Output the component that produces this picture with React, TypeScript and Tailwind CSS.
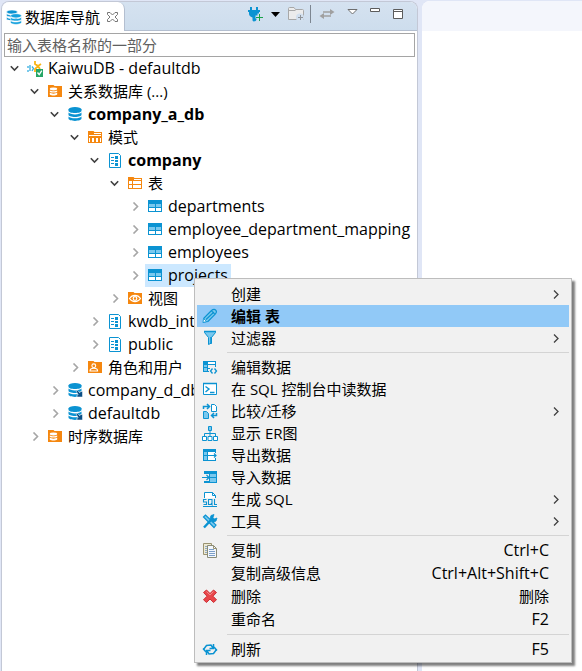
import type { ReactNode } from "react";

const BLUE = "#0b93d2";
const LIGHT = "#79c8ee";
const ORANGE = "#f5870f";

/* ---------- tree icons (15 x 15 grid) ---------- */

function TreeSvg({ children }: { children: ReactNode }) {
  return (
    <svg viewBox="0 0 15 15" className="h-[15px] w-[15px] shrink-0" aria-hidden="true">
      {children}
    </svg>
  );
}

const FolderShape = () => <path d="M0 1h5.5l1 1H14v11H0z" fill={ORANGE} />;

const Cylinder = () => (
  <g fill={BLUE}>
    <ellipse cx="7" cy="2.4" rx="6.500" ry="2.4" />
    <path d="M.5 2.400h13v1.400c0 1.300-2.800 2.300-6.500 2.300s-6.500-1-6.500-2.300z" />
    <path d="M.5 5.600c1 1.200 3.500 1.800 6.500 1.800s5.500-.6 6.500-1.800v2.200c0 1.300-2.800 2.200-6.500 2.200s-6.500-.9-6.500-2.200z" />
    <path d="M.5 9.500c1 1.200 3.500 1.800 6.500 1.800s5.500-.6 6.500-1.800v2.100c0 1.300-2.800 2.300-6.500 2.300s-6.500-1-6.500-2.300z" />
  </g>
);

const DbIcon = () => (
  <TreeSvg>
    <Cylinder />
  </TreeSvg>
);

const DbLinkIcon = () => (
  <TreeSvg>
    <Cylinder />
    <path d="M8 8l1.5-.5 2.5 2.3V8.5h2.5V14H9v-2l1.2-.4z" fill="#0b4f86" stroke="#fff" strokeWidth=".5" />
  </TreeSvg>
);

const DbFolderIcon = () => (
  <TreeSvg>
    <FolderShape />
    <g fill="#fff">
      <ellipse cx="5.5" cy="5" rx="3.7" ry="1.4" />
      <path d="M1.8 6.4c1.8 1.1 5.6 1.1 7.4 0v1.3c-1.6 1.2-5.8 1.2-7.4 0z" />
      <path d="M1.8 8.8c1.8 1.1 5.6 1.1 7.4 0v1.6c-1.6 1.4-5.8 1.4-7.4 0z" />
    </g>
  </TreeSvg>
);

const SchemaFolderIcon = () => (
  <TreeSvg>
    <FolderShape />
    <g fill="#fff" shapeRendering="crispEdges">
      <path d="M6 3h7v1H6zM1 5h12v1H1zM1 8h1v4H1zM4 8h2v4H4zM8 8h2v4H8zM12 8h1v4h-1z" />
    </g>
  </TreeSvg>
);

const TableFolderIcon = () => (
  <TreeSvg>
    <FolderShape />
    <path d="M6 3h7v1H6zM1 5h3v3H1zM5 5h8v3H5zM1 9h3v3H1zM5 9h8v3H5z" fill="#fff" shapeRendering="crispEdges" />
  </TreeSvg>
);

const ViewFolderIcon = () => (
  <TreeSvg>
    <FolderShape />
    <path d="M1.5 7.5C3 5.2 5 4.3 7 4.3s4 .9 5.500 3.200C11 9.800 9 10.700 7 10.700S3 9.800 1.500 7.500z" fill="none" stroke="#fff" strokeWidth="1.200" />
    <circle cx="7" cy="7.500" r="1.800" fill="none" stroke="#fff" strokeWidth="1.200" />
  </TreeSvg>
);

const UserFolderIcon = () => (
  <TreeSvg>
    <FolderShape />
    <g fill="none" stroke="#fff" strokeWidth="1.100">
      <circle cx="5.800" cy="5.800" r="1.900" />
      <path d="M2 11c0-2 1.500-2.700 3.800-2.700S9.600 9 9.600 11z" />
    </g>
  </TreeSvg>
);

const SchemaIcon = () => (
  <TreeSvg>
    <path d="M1.500 .5h9l2 2v12h-11z" fill="#fff" stroke={BLUE} />
    <path d="M3 4h3v1H3zM3 7h3v1H3zM3 10h3v1H3zM7 3h3v3H7zM7 7h3v2H7zM7 10h3v3H7z" fill={BLUE} shapeRendering="crispEdges" />
  </TreeSvg>
);

const TableIcon = () => (
  <TreeSvg>
    <g shapeRendering="crispEdges">
      <path d="M0 1h14v12H0z" fill={BLUE} />
      <path d="M1 5h6v3H1zM8 5h5v3H8z" fill={LIGHT} />
      <path d="M1 9h6v3H1zM8 9h5v3H8z" fill="#fff" />
    </g>
  </TreeSvg>
);

const ConnectionIcon = () => (
  <svg viewBox="0 0 16 16" className="-ml-px h-4 w-4 shrink-0" aria-hidden="true">
    <path d="M1 5v2M1 9v2M3 4v6M5 5.500l1.500 2L5 10" stroke="#35aee0" strokeWidth="1.300" fill="none" />
    <path d="M8 0v3l3 2-3 3v3M11 5l3-2M11 5l2 3" stroke="#f9b414" strokeWidth="1.800" fill="none" />
    <path d="M9 8h7v8H9z" fill="#25a566" />
    <path d="M10.500 11.500l1.700 2.200 2.600-4" stroke="#fff" strokeWidth="1.300" fill="none" />
  </svg>
);

const NavigatorIcon = () => (
  <svg viewBox="0 0 16 16" className="h-4 w-4 shrink-0" aria-hidden="true">
    <g stroke="#fff" strokeWidth=".6">
      <g fill={BLUE}>
        <ellipse cx="6" cy="3" rx="5.500" ry="2" />
        <path d="M.5 4.500c2 2 8 2 11 0V7c-3 1.600-8 1.600-11 0z" />
        <path d="M.5 8c2 2 8 2 11 0v2.500c-3 1.600-8 1.600-11 0z" />
      </g>
      <g fill="#13a0dd">
        <ellipse cx="10" cy="6.800" rx="5.500" ry="2.100" />
        <path d="M4.500 8.200c2 2 8 2 11 0v2.300c-2 2-9 2-11 0z" />
        <path d="M4.500 11.500c2 2 8 2 11 0v2.200c-2 2.300-9 2.300-11 0z" />
      </g>
    </g>
  </svg>
);

/* ---------- menu icons (16 x 16 grid) ---------- */

function MenuSvg({ children }: { children: ReactNode }) {
  return (
    <svg viewBox="0 0 16 16" className="h-4 w-4" fill="none" stroke={BLUE} aria-hidden="true">
      {children}
    </svg>
  );
}

const PencilIcon = () => (
  <MenuSvg>
    <path d="M1.500 14l.5-4 7.500-7.500c2-1.800 3.500-1.200 4.200-.4s1.300 2.300-.5 4L6 13.500z" fill={LIGHT} strokeWidth="1.200" />
    <path d="M4 11.500L12 4M9.500 2.800l3.500 3.500" strokeWidth="1.100" />
    <path d="M1.500 10.500l3 3-3.500 1z" fill="#fff" strokeWidth=".8" />
  </MenuSvg>
);

const FilterIcon = () => (
  <MenuSvg>
    <path d="M2.500 1.500h11v1l-4 5v5.500l-3 1.500V7.500l-4-5z" fill={LIGHT} />
    <path d="M2 1.500h12M9 7v7" strokeWidth="1.500" />
  </MenuSvg>
);

const EditDataIcon = () => (
  <MenuSvg>
    <g stroke="none" shapeRendering="crispEdges">
      <path d="M1 2h13v6h-1V6H6v3h2v1H6v2h1v1H1z" fill={BLUE} />
      <path d="M2 6h3v2H2zM2 9h3v3H2z" fill={LIGHT} />
      <path d="M6 3h7v2H6z" fill="#fff" />
    </g>
    <path d="M10.500 9.500l-2 2.500 2 2.500M12.500 9.500l2 2.500-2 2.500" strokeWidth="1.300" />
  </MenuSvg>
);

const ConsoleIcon = () => (
  <MenuSvg>
    <path d="M1.500 2.500h13v11h-13z" fill="#fff" />
    <path d="M1 2.500h14M3.500 5.500L7 8l-3.500 3M8 11.500h4.500" strokeWidth="1.400" />
  </MenuSvg>
);

const CompareIcon = () => (
  <MenuSvg>
    <path d="M9.500 1.500h3l2 2v5h-5z" fill="#fff" />
    <path d="M1.500 8.500h3l2 2v5h-5z" fill={LIGHT} />
    <path d="M1.500 6V3.500H7M5 1l2.500 2.500L5 6M14.500 10v2.500H9.500M12 10l-2.500 2.500L12 15" strokeWidth="1.500" />
  </MenuSvg>
);

const DiagramIcon = () => (
  <MenuSvg>
    <path d="M6.500 1.500h3v4h-3z" fill={LIGHT} />
    <path d="M.5 11.500h4v4h-4zM6 11.500h4v4H6zM11.500 11.500h4v4h-4z" fill="#fff" />
    <path d="M8 6v5M2.500 11V8.500h11V11" />
  </MenuSvg>
);

const ExportIcon = () => (
  <MenuSvg>
    <g stroke="none" shapeRendering="crispEdges">
      <path d="M1 2h13v12H1z" fill={BLUE} />
      <path d="M2 5h3v3H2zM2 9h3v4H2z" fill={LIGHT} />
      <path d="M6 5h7v8H6z" fill="#fff" />
      <path d="M13 6h2v5h-2z" fill="#f1f1f1" />
    </g>
    <path d="M6 8.500h8M12 6.500l2 2-2 2" strokeWidth="1.200" />
  </MenuSvg>
);

const ImportIcon = () => (
  <MenuSvg>
    <g stroke="none" shapeRendering="crispEdges">
      <path d="M2 2h13v12H2z" fill={BLUE} />
      <path d="M8 5h6v3H8zM8 9h6v4H8z" fill={LIGHT} />
      <path d="M0 5h7v7H0z" fill="#f1f1f1" />
    </g>
    <path d="M0 8.500h6.500M4.500 6l2.500 2.500L4.500 11" strokeWidth="1.200" />
  </MenuSvg>
);

const GenerateSqlIcon = () => (
  <MenuSvg>
    <path d="M2.500 7V1.500h8l3 3V7" fill="#fff" />
    <path d="M10.500 1.500v3h3M1 15.500h14" />
    <path d="M4.500 8.500H1.500V11h3v2.500h-3M6.500 8.500H10v5H6.500zM9 12l1.500 2.500M12.500 8v5.500H15" strokeWidth="1.100" />
  </MenuSvg>
);

const ToolsIcon = () => (
  <MenuSvg>
    <path d="M1.500 4l2-2L14 12l-2 2.500z" fill={LIGHT} strokeWidth="1.200" />
    <path d="M2 14.500l7.500-8" strokeWidth="2.400" />
    <path d="M8 5.500l1-3 3-1-1 3L12.500 6l2.500-1-1 3-3 1.500z" fill={BLUE} strokeWidth=".8" />
  </MenuSvg>
);

const CopyIcon = () => (
  <MenuSvg>
    <path d="M1.500 1.500h8v11h-8z" fill="#eee9d2" stroke="#9a9472" />
    <path d="M3 4.500h2M3 6.500h2M3 8.500h2M3 10.500h2" stroke="#8fa9c4" />
    <path d="M5.500 3.500h6l3 3v9h-9z" fill="#f3f7fd" stroke="#8a8c78" />
    <path d="M7 7.500h5M7 9.500h6M7 11.500h6M7 13.500h6" stroke="#7c9fc8" />
    <path d="M11.500 3.500v3h3" stroke="#9a9472" />
  </MenuSvg>
);

const DeleteIcon = () => (
  <MenuSvg>
    <path d="M4.500 2L8 5.500 11.500 2 14.500 4.500 11 8.200l3.500 3.600-3 2.700L8 11l-3.500 3.500-3-2.700L5 8.200 1.500 4.500z" fill="#e8474b" stroke="#cf2f35" />
    <path d="M4.500 3.500L8 7l3.500-3.500" stroke="#f28a8a" />
  </MenuSvg>
);

const RefreshIcon = () => (
  <MenuSvg>
    <path d="M1.500 8.500l3-4L9 4l2 3M11.500 3v4.500H7.500M14.500 8.500l-3 4L7 13l-2-3M4.500 14V9.500H8.500" strokeWidth="1.500" />
    <path d="M1 7.500l3 3.500M15 9.500L12 6" strokeWidth="1.500" />
  </MenuSvg>
);

/* ---------- navigator tree ---------- */

type Node = {
  label: string;
  icon: ReactNode;
  open?: boolean;
  bold?: boolean;
  selected?: boolean;
  children?: Node[];
};

const tree: Node[] = [
  {
    label: "KaiwuDB - defaultdb",
    icon: <ConnectionIcon />,
    open: true,
    children: [
      {
        label: "关系数据库 (...)",
        icon: <DbFolderIcon />,
        open: true,
        children: [
          {
            label: "company_a_db",
            icon: <DbIcon />,
            open: true,
            bold: true,
            children: [
              {
                label: "模式",
                icon: <SchemaFolderIcon />,
                open: true,
                children: [
                  {
                    label: "company",
                    icon: <SchemaIcon />,
                    open: true,
                    bold: true,
                    children: [
                      {
                        label: "表",
                        icon: <TableFolderIcon />,
                        open: true,
                        children: [
                          { label: "departments", icon: <TableIcon /> },
                          { label: "employee_department_mapping", icon: <TableIcon /> },
                          { label: "employees", icon: <TableIcon /> },
                          { label: "projects", icon: <TableIcon />, selected: true },
                        ],
                      },
                      { label: "视图", icon: <ViewFolderIcon /> },
                    ],
                  },
                  { label: "kwdb_internal", icon: <SchemaIcon /> },
                  { label: "public", icon: <SchemaIcon /> },
                ],
              },
              { label: "角色和用户", icon: <UserFolderIcon /> },
            ],
          },
          { label: "company_d_db", icon: <DbLinkIcon /> },
          { label: "defaultdb", icon: <DbLinkIcon /> },
        ],
      },
      { label: "时序数据库", icon: <DbFolderIcon /> },
    ],
  },
];

/* Latin-only text is set one size up so that it balances the CJK glyphs. */
const textSize = (text: string) => (/^[\x20-\x7e]+$/.test(text) ? "text-[16px]" : "text-[15px]");

function TreeItem({ node }: { node: Node }) {
  return (
    <li role="treeitem" aria-expanded={!!node.open} aria-selected={!!node.selected}>
      <div className="flex h-[23px] items-center pl-1">
        <button type="button" aria-label={node.open ? "折叠" : "展开"} className="flex h-[15px] w-4 shrink-0 items-center justify-center">
          <svg viewBox="0 0 9 9" className="h-[9px] w-[9px]" fill="none" strokeWidth="1.6">
            {node.open ? <path d="M.8 2.300l3.700 3.700 3.700-3.700" stroke="#404040" /> : <path d="M3.500 .5l4 4-4 4" stroke="#a6a6a6" />}
          </svg>
        </button>
        <button
          type="button"
          className={`ml-[3px] flex h-full items-center gap-[5px] whitespace-nowrap pl-[3px] pr-[3px] ${node.selected ? "bg-[#cce8ff]" : ""} ${node.bold ? "font-bold" : ""}`}
        >
          {node.icon}
          <span className={`pb-px leading-[22px] ${textSize(node.label)}`}>{node.label}</span>
        </button>
      </div>
      {node.children && (
        <ul role="group" className="pl-5">
          {node.children.map((child) => (
            <TreeItem key={child.label} node={child} />
          ))}
        </ul>
      )}
    </li>
  );
}

/* ---------- context menu ---------- */

type Item = {
  label: string;
  icon?: ReactNode;
  shortcut?: string;
  submenu?: boolean;
  active?: boolean;
};

const compactGroups: Item[][] = [
  [
    { label: "创建", submenu: true },
    { label: "编辑 表", icon: <PencilIcon />, active: true },
    { label: "过滤器", icon: <FilterIcon />, submenu: true },
  ],
  [
    { label: "编辑数据", icon: <EditDataIcon /> },
    { label: "在 SQL 控制台中读数据", icon: <ConsoleIcon /> },
    { label: "比较/迁移", icon: <CompareIcon />, submenu: true },
    { label: "显示 ER图", icon: <DiagramIcon /> },
    { label: "导出数据", icon: <ExportIcon /> },
    { label: "导入数据", icon: <ImportIcon /> },
    { label: "生成 SQL", icon: <GenerateSqlIcon />, submenu: true },
    { label: "工具", icon: <ToolsIcon />, submenu: true },
  ],
];

const shortcutGroups: Item[][] = [
  [
    { label: "复制", icon: <CopyIcon />, shortcut: "Ctrl+C" },
    { label: "复制高级信息", shortcut: "Ctrl+Alt+Shift+C" },
    { label: "删除", icon: <DeleteIcon />, shortcut: "删除" },
    { label: "重命名", shortcut: "F2" },
  ],
  [{ label: "刷新", icon: <RefreshIcon />, shortcut: "F5" }],
];

function MenuRow({ item, tall }: { item: Item; tall?: boolean }) {
  return (
    <button
      type="button"
      role="menuitem"
      className={`flex w-full items-center whitespace-nowrap pl-[5px] pr-2.5 text-left leading-[22px] ${tall ? "h-[23px]" : "h-[22px]"} ${item.active ? "bg-[#91c9f7] font-bold" : ""}`}
    >
      <span className="mt-[3px] h-4 w-4 shrink-0 self-start">{item.icon}</span>
      <span className={`ml-[13px] flex-1 ${tall ? "pb-px" : ""}`}>{item.label}</span>
      {item.shortcut && <span className={`pb-px pr-2.5 leading-[22px] ${textSize(item.shortcut)}`}>{item.shortcut}</span>}
      {item.submenu && (
        <svg viewBox="0 0 6 9" className="h-[9px] w-1.5" fill="none" stroke="#404040" strokeWidth="1.3" aria-hidden="true">
          <path d="M1 .5l4 4-4 4" />
        </svg>
      )}
    </button>
  );
}

const Separator = () => <hr className="my-[3px] ml-[30px] border-t border-[#d4d4d4]" />;

function ContextMenu() {
  return (
    <div
      role="menu"
      className="absolute left-[194px] top-[278px] w-[378px] border border-[#bdbdbd] bg-[#f1f1f1] px-0.5 pb-px pt-1 shadow-[3px_3px_2px_rgba(0,0,0,0.5)]"
    >
      {compactGroups.map((group, i) => (
        <div key={i}>
          {group.map((item) => (
            <MenuRow key={item.label} item={item} />
          ))}
          <Separator />
        </div>
      ))}
      {shortcutGroups.map((group, i) => (
        <div key={i}>
          {i > 0 && <Separator />}
          {group.map((item) => (
            <MenuRow key={item.label} item={item} tall />
          ))}
        </div>
      ))}
    </div>
  );
}

/* ---------- view header ---------- */

function Toolbar() {
  return (
    <div className="flex h-6 items-center pr-3.5">
      <button type="button" aria-label="新建连接">
        <svg viewBox="0 0 16 16" className="h-4 w-4">
          <path d="M2 1h2v3h4V1h2v3h2v2h-1v2c0 2-1 3-2.500 3.500V13c0 1.500-1 2.500-3 2.500l-1-1V11.500C3 11 1 10 1 8V6H0V4h2z" fill={BLUE} />
          <path d="M11 7.500v7M7.500 11h7" stroke="#d2e0ef" strokeWidth="3" />
          <path d="M11.500 8v7M8 11.500h7" stroke="#18a34a" />
        </svg>
      </button>
      <button type="button" aria-label="连接菜单" className="ml-[7px]">
        <svg viewBox="0 0 9 5" className="h-[5px] w-[9px]">
          <path d="M0 0h9L4.500 5z" fill="#000" />
        </svg>
      </button>
      <button type="button" aria-label="新建文件夹" className="ml-2">
        <svg viewBox="0 0 16 16" className="h-4 w-4">
          <path d="M.5 2.500c0-.6.4-1 1-1H6l1.500 2h7c.6 0 1 .4 1 1v9h-15z" fill="#ececec" stroke="#a8a8a8" />
          <path d="M.5 4.500h7" stroke="#a8a8a8" />
          <circle cx="12" cy="11.500" r="4" fill="#d2e0ef" />
          <path d="M12.500 9v5M10 11.500h5" stroke="#8f9398" />
        </svg>
      </button>
      <span className="ml-1.5 h-[18px] w-px bg-[#7d8691]" />
      <button type="button" aria-label="与编辑器链接" className="ml-2">
        <svg viewBox="0 0 16 12" className="h-3 w-4" fill="#a0a0a0">
          <path d="M4 3.200h7V1l4.500 3-4.500 3V4.800H4zM12 7.200H5V5L.5 8 5 11V8.800h7z" />
        </svg>
      </button>
      <button type="button" aria-label="视图菜单" className="-mt-1 ml-3">
        <svg viewBox="0 0 11 6" className="h-1.5 w-[11px]">
          <path d="M1 .5h9L5.500 5z" fill="#fff" stroke="#6e6e6e" />
        </svg>
      </button>
      <button type="button" aria-label="最小化" className="-mt-2 ml-3">
        <svg viewBox="0 0 10 4" className="h-1 w-2.5">
          <path d="M.5.5h9v3h-9z" fill="#fff" stroke="#5c5c5c" />
        </svg>
      </button>
      <button type="button" aria-label="最大化" className="ml-[13px]">
        <svg viewBox="0 0 10 10" className="h-2.5 w-2.5">
          <path d="M.5.5h9v9h-9zM.5 2.500h9" fill="#fff" stroke="#5c5c5c" />
        </svg>
      </button>
    </div>
  );
}

export default function App() {
  return (
    <div className="relative grid min-h-screen grid-cols-[417fr_160fr] gap-1 bg-[#e0e6f6] pl-px pt-px font-['Open_Sans','Noto_Sans_CJK_SC',sans-serif] text-[15px] leading-[22px] text-black">
      <section className="min-w-0 rounded-t-lg border-x border-t border-[#c3c8d6] bg-white">
        <header className="flex h-[29px] items-start justify-between rounded-t-[7px] bg-linear-to-b from-[#d5e2f0] to-[#cddded]">
          <div className="flex h-[29px] flex-none items-center rounded-t-[7px] border-r border-[#b4bfd0] bg-white pl-1 pr-1.5">
            <NavigatorIcon />
            <span className="ml-[3px] whitespace-nowrap">数据库导航</span>
            <button type="button" aria-label="关闭" className="ml-[7px]">
              <svg viewBox="0 0 11 10" className="h-2.5 w-[11px]">
                <path d="M.5.5h2.500l2.500 2.500L8 .5h2.500v2L8 5l2.500 2.500v2H8L5.500 7 3 9.500H.5v-2L3 5 .5 2.500z" fill="#fff" stroke="#777" />
              </svg>
            </button>
          </div>
          <div className="flex h-[29px] flex-1 justify-end border-b border-[#b4bfd0]">
            <Toolbar />
          </div>
        </header>
        <div className="px-0.5 pt-0.5">
          <input
            type="text"
            aria-label="筛选"
            placeholder="输入表格名称的一部分"
            className="block h-6 w-full border border-[#a5a5a5] bg-white px-0.5 outline-none placeholder:text-[#606060]"
          />
        </div>
        <ul role="tree" className="overflow-hidden">
          {tree.map((node) => (
            <TreeItem key={node.label} node={node} />
          ))}
        </ul>
      </section>
      <section className="min-w-0 rounded-tl-lg bg-white">
        <div className="h-[30px] rounded-tl-lg bg-[#f4f6fc]" />
      </section>
      <ContextMenu />
    </div>
  );
}
